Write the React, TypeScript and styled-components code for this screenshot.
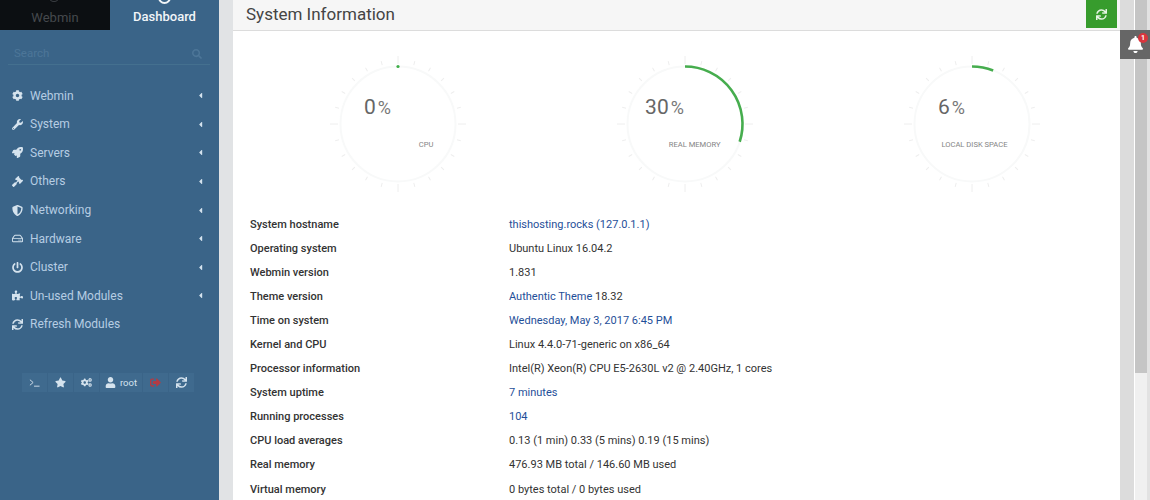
import React, { FC } from 'react'
import styled, { createGlobalStyle } from 'styled-components'
import {
  FaCog,
  FaWrench,
  FaRocket,
  FaGavel,
  FaShieldAlt,
  FaRegHdd,
  FaPowerOff,
  FaPuzzlePiece,
  FaSync,
  FaStar,
  FaCogs,
  FaUser,
  FaSignOutAlt,
  FaSearch,
  FaBell,
  FaCaretLeft,
} from 'react-icons/fa'

const menu = [
  { label: 'Webmin', icon: FaCog, arrow: true },
  { label: 'System', icon: FaWrench, arrow: true },
  { label: 'Servers', icon: FaRocket, arrow: true },
  { label: 'Others', icon: FaGavel, arrow: true },
  { label: 'Networking', icon: FaShieldAlt, arrow: true },
  { label: 'Hardware', icon: FaRegHdd, arrow: true },
  { label: 'Cluster', icon: FaPowerOff, arrow: true },
  { label: 'Un-used Modules', icon: FaPuzzlePiece, arrow: true },
  { label: 'Refresh Modules', icon: FaSync, arrow: false },
]

const gauges = [
  { value: 0, label: 'CPU' },
  { value: 30, label: 'REAL MEMORY' },
  { value: 6, label: 'LOCAL DISK SPACE' },
]

const rows: { name: string; value: React.ReactNode }[] = [
  { name: 'System hostname', value: <a>thishosting.rocks (127.0.1.1)</a> },
  { name: 'Operating system', value: 'Ubuntu Linux 16.04.2' },
  { name: 'Webmin version', value: '1.831' },
  { name: 'Theme version', value: <><a>Authentic Theme</a> 18.32</> },
  { name: 'Time on system', value: <a>Wednesday, May 3, 2017 6:45 PM</a> },
  { name: 'Kernel and CPU', value: 'Linux 4.4.0-71-generic on x86_64' },
  { name: 'Processor information', value: 'Intel(R) Xeon(R) CPU E5-2630L v2 @ 2.40GHz, 1 cores' },
  { name: 'System uptime', value: <a>7 minutes</a> },
  { name: 'Running processes', value: <a>104</a> },
  { name: 'CPU load averages', value: '0.13 (1 min) 0.33 (5 mins) 0.19 (15 mins)' },
  { name: 'Real memory', value: '476.93 MB total / 146.60 MB used' },
  { name: 'Virtual memory', value: '0 bytes total / 0 bytes used' },
]

const GlobalStyle = createGlobalStyle`
  html, body {
    margin: 0;
    height: 500px;
    overflow: hidden;
    background: #e1e3e5;
    font-family: Roboto, "Liberation Sans", sans-serif;
  }
`

const Gauge: FC<{ value: number; label: string }> = ({ value, label }) => {
  const cx = 72
  const cy = 72
  const r = 57.5
  const ticks = Array.from({ length: 24 }, (_, i) => i * 15)
  const end = (value / 100) * 2 * Math.PI
  const x = cx + r * Math.sin(end)
  const y = cy - r * Math.cos(end)
  return (
    <GaugeBox>
      <svg width="144" height="144" viewBox="0 0 144 144">
        <circle cx={cx} cy={cy} r={r} fill="none" stroke="#f8f9f9" strokeWidth="2" />
        {ticks.map((deg) => (
          <line
            key={deg}
            x1={cx}
            y1={deg % 90 === 0 ? 4 : 7}
            x2={cx}
            y2={deg % 90 === 0 ? 12 : 11}
            stroke="#eeeeee"
            transform={`rotate(${deg} ${cx} ${cy})`}
          />
        ))}
        {value === 0 ? (
          <circle cx={cx} cy={cy - r} r="1.6" fill="#3fae49" />
        ) : (
          <path
            d={`M${cx} ${cy - r} A${r} ${r} 0 0 1 ${x} ${y}`}
            fill="none"
            stroke="#46ad4e"
            strokeWidth="2.6"
          />
        )}
      </svg>
      <GaugeValue>
        {value}
        <small>%</small>
      </GaugeValue>
      <GaugeLabel>{label}</GaugeLabel>
    </GaugeBox>
  )
}

const App: FC = () => {
  return (
    <Page>
      <GlobalStyle />
      <Sidebar>
        <Tabs>
          <DarkTab>
            <TabCog />
            Webmin
          </DarkTab>
          <ActiveTab>
            <TabRing />
            Dashboard
          </ActiveTab>
        </Tabs>
        <SearchBar>
          <span>Search</span>
          <FaSearch />
        </SearchBar>
        <Menu>
          {menu.map((item) => (
            <MenuItem key={item.label}>
              <item.icon />
              <span>{item.label}</span>
              {item.arrow && <FaCaretLeft />}
            </MenuItem>
          ))}
        </Menu>
        <Toolbar>
          <ToolButton>
            <svg viewBox="0 0 12 12" fill="none" stroke="currentColor" strokeWidth="1">
              <path d="M1 3l3.5 3L1 9M5.5 10H11.5" />
            </svg>
          </ToolButton>
          <ToolButton><FaStar /></ToolButton>
          <ToolButton><FaCogs /></ToolButton>
          <ToolButton $wide><FaUser /> root</ToolButton>
          <ToolButton $danger><FaSignOutAlt /></ToolButton>
          <ToolButton><FaSync /></ToolButton>
        </Toolbar>
      </Sidebar>
      <Main>
        <Header>
          <h1>System Information</h1>
          <RefreshButton><FaSync /></RefreshButton>
        </Header>
        <Gauges>
          {gauges.map((g) => (
            <Gauge key={g.label} {...g} />
          ))}
        </Gauges>
        <InfoTable>
          {rows.map((row) => (
            <React.Fragment key={row.name}>
              <dt>{row.name}</dt>
              <dd>{row.value}</dd>
            </React.Fragment>
          ))}
        </InfoTable>
      </Main>
      <Rail>
        <Track />
        <Scrollbar>
          <Thumb />
        </Scrollbar>
        <Notice>
          <FaBell />
          <Badge>1</Badge>
        </Notice>
      </Rail>
    </Page>
  )
}

const Page = styled.div`
  display: flex;
  width: 1150px;
  height: 500px;
  overflow: hidden;
  background: #e1e3e5;
`
const Sidebar = styled.aside`
  width: 219px;
  flex: none;
  background: #3a6488;
  margin-right: 14px;
`
const Tabs = styled.div`
  display: flex;
  height: 30px;
`
const DarkTab = styled.div`
  position: relative;
  width: 110px;
  background: #0c0f12;
  color: #45494d;
  font-size: 13px;
  text-align: center;
  line-height: 35px;
  overflow: hidden;
`
const TabCog = styled.i`
  position: absolute;
  left: 49px;
  top: -7px;
  width: 8px;
  height: 7px;
  border: 1px solid #3a3e42;
  border-radius: 50%;
`
const ActiveTab = styled.div`
  position: relative;
  flex: 1;
  color: #f1f5f8;
  font-size: 13px;
  font-weight: 500;
  text-align: center;
  line-height: 33px;
  overflow: hidden;
`
const TabRing = styled.i`
  position: absolute;
  left: 48px;
  top: -9px;
  width: 9px;
  height: 9px;
  border: 2px solid #f1f5f8;
  border-radius: 50%;
`
const SearchBar = styled.div`
  display: flex;
  align-items: flex-end;
  justify-content: space-between;
  height: 35px;
  margin: 0 9px 0 8px;
  padding: 0 8px 4px 6px;
  border-bottom: 1px solid #44708f;
  color: #4d7698;
  font-size: 11.5px;
  box-sizing: border-box;
  svg {
    width: 10px;
    height: 10px;
    margin-bottom: 1px;
  }
`
const Menu = styled.nav`
  margin-top: 16.3px;
`
const MenuItem = styled.div`
  display: flex;
  align-items: center;
  height: 28.62px;
  padding: 0 15px 0 12px;
  color: #b6cde3;
  font-size: 12px;
  svg:first-child {
    width: 11px;
    height: 11px;
    margin-right: 7px;
    color: #d5e3ee;
  }
  span {
    flex: 1;
  }
  svg:last-child:not(:first-child) {
    width: 7px;
    height: 9px;
    color: #d5e3ee;
  }
`
const Toolbar = styled.div`
  display: flex;
  gap: 1px;
  align-items: center;
  margin: 34.7px 0 0 22px;
`
const ToolButton = styled.div<{ $danger?: boolean; $wide?: boolean }>`
  display: flex;
  align-items: center;
  justify-content: center;
  gap: 4px;
  width: ${(p) => (p.$wide ? '42px' : '25px')};
  height: 19px;
  background: #3f6a8e;
  color: ${(p) => (p.$danger ? '#b23b44' : '#d5e3ee')};
  font-size: 9.5px;
  svg {
    width: 11px;
    height: 11px;
  }
`
const Main = styled.main`
  width: 887px;
  flex: none;
  background: #fff;
`
const Header = styled.header`
  display: flex;
  justify-content: space-between;
  height: 31px;
  background: #f6f6f6;
  border-bottom: 1px solid #dcdcdc;
  box-sizing: border-box;
  padding: 0 3px 0 13px;
  h1 {
    margin: 0;
    font-size: 17px;
    font-weight: 400;
    color: #444;
    line-height: 28px;
  }
`
const RefreshButton = styled.div`
  display: flex;
  align-items: center;
  justify-content: center;
  width: 31px;
  height: 28px;
  background: #379c2d;
  color: #e6f4e4;
  svg {
    width: 11px;
    height: 11px;
  }
`
const Gauges = styled.section`
  display: grid;
  grid-template-columns: repeat(3, 287px);
  padding: 21px 0 0 21px;
  height: 173px;
  box-sizing: border-box;
`
const GaugeBox = styled.div`
  position: relative;
  justify-self: center;
  width: 144px;
  height: 144px;
  svg {
    display: block;
  }
`
const GaugeValue = styled.div`
  position: absolute;
  left: 16px;
  right: 56px;
  top: 41px;
  text-align: center;
  color: #666;
  font-size: 21px;
  line-height: 28px;
  small {
    font-size: 18px;
    margin-left: 2px;
    color: #777;
  }
`
const GaugeLabel = styled.div`
  position: absolute;
  right: 36px;
  top: 88px;
  white-space: nowrap;
  color: #858585;
  font-size: 7.6px;
  line-height: 10px;
`
const InfoTable = styled.dl`
  display: grid;
  grid-template-columns: 259px 1fr;
  grid-auto-rows: 24.05px;
  margin: 9px 0 0 17px;
  font-size: 11px;
  line-height: 24px;
  dt {
    font-weight: 500;
    color: #333;
  }
  dd {
    margin: 0;
    color: #333;
  }
  a {
    color: #1f4f99;
  }
`
const Rail = styled.div`
  position: relative;
  flex: 1;
  display: flex;
`
const Track = styled.div`
  width: 14px;
  background: #dcdcdc;
  border-right: 1px solid #fff;
`
const Scrollbar = styled.div`
  flex: 1;
  background: #f0f0f0;
  border-right: 3px solid #e2e2e2;
`
const Thumb = styled.div`
  height: 373px;
  background: #c5c5c5;
`
const Notice = styled.div`
  position: absolute;
  left: 0;
  top: 30px;
  width: 30px;
  height: 29px;
  display: flex;
  align-items: center;
  justify-content: center;
  background: #666;
  color: #fff;
  svg {
    width: 17px;
    height: 17px;
  }
`
const Badge = styled.span`
  position: absolute;
  top: 3px;
  right: 2px;
  width: 10px;
  height: 10px;
  border-radius: 50%;
  background: #d9363e;
  color: #fff;
  font-size: 7px;
  font-weight: 700;
  line-height: 10px;
  text-align: center;
`

export default App
